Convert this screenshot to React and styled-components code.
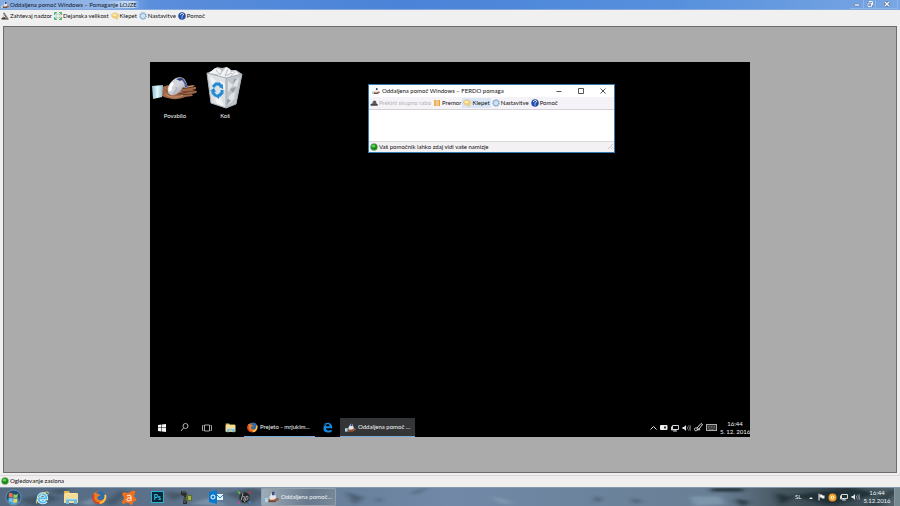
import React from 'react';
import styled, { createGlobalStyle } from 'styled-components';

const GlobalStyle = createGlobalStyle`
  *, *::before, *::after { box-sizing: border-box; }
  body { margin: 0; background: #f0eff0; }
  body, button { font-family: Lato, "Open Sans", sans-serif; font-size: 6px; line-height: 8px; }
  h1, h2, p { margin: 0; font-size: inherit; font-weight: 400; }
  button { border: 0; padding: 0; background: none; color: inherit; }
  svg { display: block; flex: none; }
`;

/* ---------- shared parts ---------- */

const Page = styled.div`
  display: flex;
  flex-direction: column;
  min-height: 100vh;
  color: #111;
  overflow: hidden;
`;

const TitleBar = styled.header`
  display: flex;
  align-items: center;
  height: 10px;
  padding-left: 1px;
  color: #10182c;
  background: linear-gradient(90deg, #86abe0 0, #93b7e8 110px, #5b8edb 150px, #4a83d8 45%, #5690dd 75%, #79a6e3 100%);
  border-bottom: 1px solid #84a9dc;
`;

const Caption = styled.h1`
  flex: 1;
  padding-left: 1px;
  white-space: nowrap;
  span {
    padding-right: 2px;
    background: linear-gradient(90deg, transparent 75%, #c2d8f2 88%, #c2d8f2 96%, transparent);
  }
`;

const Controls = styled.div`
  display: flex;
  align-self: stretch;
  padding-right: 2px;
`;

const GlassButton = styled.button`
  display: grid;
  place-items: center;
  width: ${(p) => p.$width}px;
  height: 9px;
  border: 1px solid #8fb4e8;
  border-top: 0;
  border-left-width: 0;
`;

const ToolBar = styled.nav`
  display: flex;
  align-items: center;
  height: 12px;
  background: ${(p) => p.$tone || '#f0f0f0'};
  white-space: nowrap;
`;

const ToolButton = styled.button`
  display: flex;
  align-items: center;
  gap: 1px;
  height: 10px;
  padding: 0 1px;
  color: ${(p) => (p.disabled ? '#b3b0b4' : '#111')};
  background: ${(p) => (p.$active ? '#d9e6f6' : 'transparent')};
`;

const Viewer = styled.main`
  display: flex;
  flex: 1;
  align-items: center;
  justify-content: center;
  margin: 4px 3px 2px;
  border: 1px solid #6c6c6c;
  background: #ababab;
`;

const StatusBar = styled.footer`
  display: flex;
  align-items: center;
  gap: 1px;
  height: ${(p) => p.$height}px;
  padding: 0 1px 1px;
  background: ${(p) => p.$tone || '#f0efee'};
  border-top: 1px solid #dad8da;
  color: #111;
`;

/* ---------- remote desktop ---------- */

const RemoteScreen = styled.section`
  position: relative;
  display: flex;
  flex-direction: column;
  justify-content: space-between;
  width: calc(100% - 292px);
  aspect-ratio: 8 / 5;
  background: #000;
  color: #f4f4f4;
  overflow: hidden;
`;

const Shortcuts = styled.div`
  display: flex;
  padding-top: 4px;
`;

const Shortcut = styled.button`
  display: flex;
  flex-direction: column;
  align-items: center;
  gap: 3px;
  width: 50px;
`;

const HelpWindow = styled.section`
  position: absolute;
  left: 218px;
  top: 22px;
  display: flex;
  flex-direction: column;
  width: 247px;
  height: 69px;
  border: 1px solid #3677ad;
  background: #fff;
  color: #111;
`;

const HelpTitle = styled.div`
  display: flex;
  align-items: center;
  height: 12px;
  padding-left: 3px;
  gap: 2px;
`;

const HelpCaption = styled.h2`
  flex: 1;
  white-space: nowrap;
`;

const WindowButtons = styled.div`
  display: flex;
`;

const FlatButton = styled.button`
  display: grid;
  place-items: center;
  width: 22px;
  height: 12px;
`;

const Chat = styled.div`
  flex: 1;
  border-top: 1px solid #d4d1d6;
`;

const Grow = styled.span`
  flex: 1;
`;

const RemoteTaskbar = styled.div`
  display: flex;
  height: 19px;
`;

const RemoteLaunch = styled.button`
  display: grid;
  place-items: center;
  width: ${(p) => p.$width || 23}px;
`;

const RemoteTask = styled.button`
  display: flex;
  align-items: center;
  gap: 2px;
  width: ${(p) => p.$width}px;
  padding-left: ${(p) => p.$inset}px;
  border-bottom: 1px solid #76a9d8;
  background: ${(p) => (p.$active ? '#343536' : 'transparent')};
  white-space: nowrap;
`;

const Tray = styled.div`
  display: flex;
  align-items: center;
  gap: 3px;
  margin-left: auto;
`;

const Clock = styled.time`
  display: flex;
  flex-direction: column;
  align-items: center;
  width: ${(p) => p.$width}px;
  line-height: 8px;
  white-space: nowrap;
`;

/* ---------- host taskbar ---------- */

const HostTaskbar = styled.footer`
  position: relative;
  display: flex;
  height: 19px;
  background: #68809b;
  color: #f2f5f8;
  overflow: hidden;
  border-top: 1px solid #8799ac;
`;

const Wallpaper = styled.svg`
  position: absolute;
  inset: 0;
  width: 100%;
  height: 100%;
`;

const Launchers = styled.div`
  position: relative;
  display: flex;
`;

const Launcher = styled.button`
  display: grid;
  place-items: center;
  width: ${(p) => p.$width || 29}px;
`;

const HostTask = styled.button`
  display: flex;
  align-items: center;
  gap: 2px;
  width: 75px;
  margin-left: 2px;
  padding-left: 3px;
  border: 1px solid #929fac;
  border-radius: 1px;
  background: linear-gradient(100deg, #a0adba, #66788b 65%, #78899a);
  white-space: nowrap;
`;

const HostTray = styled.div`
  position: relative;
  display: flex;
  align-items: center;
  gap: 3px;
  margin-left: auto;
`;

const Language = styled.span`
  width: 9px;
`;

const ShowDesktop = styled.button`
  align-self: stretch;
  width: 6px;
  border-left: 1px solid #8495a1;
  background: #778990;
`;

/* ---------- drawings ---------- */

const HelpIcon = ({ size = 8 }) => (
  <svg width={size} height={size} viewBox="0 0 16 16" aria-hidden="true">
    <path d="M0 9h4v5H0z" fill="#a9d5e9" />
    <path d="M4 10l4-1h7l1 2-5 3H4z" fill="#9a5f40" />
    <path d="M5 10V8l3-5 3 0 2 6-3 2H6z" fill="#e3e5ea" />
    <path d="M8 2h3v4H8z" fill="#375080" />
    <path d="M4 13h8" stroke="#623724" />
  </svg>
);
const ControlIcon = () => (
  <svg width="8" height="8" viewBox="0 0 16 16" aria-hidden="true">
    <path d="M1 15v-3l6-2 8 3v2z" fill="#3b3634" />
    <path d="M4 2l3-1 7 11-4 2-6-6z" fill="#77777b" />
    <path d="M5 4l1 4 4 4" stroke="#edf1f4" strokeWidth="2" fill="none" />
    <path d="M8 11l5 2" stroke="#bf7250" strokeWidth="2" />
  </svg>
);
const StopIcon = () => (
  <svg width="8" height="8" viewBox="0 0 16 16" aria-hidden="true">
    <path d="M1 13v-3l4-1V6l3-3 4 1 1 5 3 2v2z" fill="#5c5b5e" />
    <path d="M2 12h12" stroke="#363538" strokeWidth="2" />
  </svg>
);
const SizeIcon = () => (
  <svg width="8" height="8" viewBox="0 0 16 16" aria-hidden="true">
    <rect x="4" y="4" width="8" height="8" fill="#e5f1ee" stroke="#9eb3aa" />
    <path d="M1 6V1h5M10 1h5v5M15 10v5h-5M6 15H1v-5M1 1l4 4M15 1l-4 4M15 15l-4-4M1 15l4-4" fill="none" stroke="#5cb877" strokeWidth="2" />
  </svg>
);
const ChatIcon = () => (
  <svg width="8" height="8" viewBox="0 0 16 16" aria-hidden="true">
    <path d="M8 2c4 0 7 2 7 5 0 2-1 4-3 4l1 4-5-3c-4 0-7-2-7-5s3-5 7-5z" fill="#f8cf78" stroke="#deb766" />
    <ellipse cx="7" cy="6" rx="4" ry="2" fill="#fff0b9" />
  </svg>
);
const GearIcon = () => (
  <svg width="8" height="8" viewBox="0 0 16 16" aria-hidden="true">
    <circle cx="8" cy="8" r="6" fill="#e9f4fb" stroke="#83abd0" strokeWidth="3" strokeDasharray="3 1" />
    <circle cx="8" cy="8" r="5" fill="none" stroke="#94b8d8" strokeWidth="2" />
    <circle cx="8" cy="8" r="2" fill="#fff" stroke="#9abbd7" />
  </svg>
);
const QuestionIcon = () => (
  <svg width="8" height="8" viewBox="0 0 16 16" aria-hidden="true">
    <circle cx="8" cy="8" r="7" fill="#2552b2" stroke="#153a83" />
    <path d="M5 6c0-4 6-4 6-1 0 2-3 2-3 4M8 11v2" fill="none" stroke="#fff" strokeWidth="2" />
  </svg>
);
const PauseIcon = () => (
  <svg width="8" height="8" viewBox="0 0 16 16" aria-hidden="true">
    <path d="M2 2h5v12H2zM9 2h5v12H9z" fill="#e5a235" />
    <path d="M4 3v10M11 3v10" stroke="#f9cd75" strokeWidth="2" />
  </svg>
);
const GreenLight = () => (
  <svg width="8" height="8" viewBox="0 0 16 16" aria-hidden="true">
    <circle cx="8" cy="8" r="7" fill="#138a17" stroke="#9dad99" />
    <ellipse cx="7" cy="6" rx="4" ry="3" fill="#61cd4e" />
  </svg>
);

const InviteArt = () => (
  <svg width="46" height="43" viewBox="0 0 46 43" aria-hidden="true">
    <defs>
      <linearGradient id="cuff" x2="1"><stop stopColor="#8abfd2" /><stop offset=".5" stopColor="#e2f7fc" /><stop offset="1" stopColor="#91bac9" /></linearGradient>
      <linearGradient id="mouse" x2="1" y2="1"><stop offset=".1" stopColor="#d5d7dd" /><stop offset=".5" stopColor="#d0d2d9" /><stop offset="1" stopColor="#7f8394" /></linearGradient>
    </defs>
    <path d="M10 21c5-2 9-2 15-1h9l8-1 1 1-3 1h4v2l-4 1 5 1-1 2-5 1 2 1-1 1-7 1c-7 3-14 3-23-1z" fill="#a26a4a" />
    <path d="M14 24c7 5 15 5 23 1M28 23l14-2M30 26l13-1M28 29l11-1" stroke="#68402b" fill="none" />
    <path d="M13 28c5 4 12 4 18 1M34 21l7-1" stroke="#c99470" fill="none" />
    <path d="M0 20l11-1-1 12-9 2z" fill="url(#cuff)" />
    <path d="M16 26c-1-4 1-8 4-11 3-3 7-5 11-3 3 2 4 6 5 10l-5-1c-2 4-5 7-9 8-3 1-5-1-6-3z" fill="url(#mouse)" />
    <path d="M30 12c3 2 5 6 6 10l-3-1c0-4-2-6-5-8z" fill="#4b5a96" />
    <path d="M24 13l4-1 3 1-3 2z" fill="#2c3a72" />
    <path d="M21 17c-2 2-3 5-3 8" stroke="#fff" strokeWidth="3" fill="none" />
    <path d="M24 21c1 3-1 5-3 7" stroke="#a1a4b0" fill="none" />
  </svg>
);
const BinArt = () => (
  <svg width="38" height="43" viewBox="0 0 38 43" aria-hidden="true">
    <path d="M1 7l7-3 3-3 5 1 5-1 4 3 5 0 6 4-6 30-10 4-15-5z" fill="#b9bec3" />
    <path d="M3 7l6-5 5 1 2 3 4-5 4 2 1 3 5-1 4 4-14 4-13-3z" fill="#f1f2f3" />
    <path d="M1 7l19 5v30L5 37z" fill="#dde1e4" />
    <path d="M20 12l16-4-6 30-10 4z" fill="#c0c5ca" />
    <path d="M22 15l5 4-5 7zM29 14l4-2-2 9-4-1zM23 30l6-5-1 8-6 6z" fill="#e0e4e7" />
    <path d="M24 23l6-2-3 6zM21 33l4 1-4 5zM28 13l3 0-4 5z" fill="#979fa7" />
    <path d="M4 10l6 5-4 4zM14 14l5 4v7zM9 33l5-2 4 9-7-2z" fill="#f3f4f5" />
    <path d="M10 4l4 5 3-6M22 3l-3 7 7-3M29 6l-4 4M6 8l6 1" fill="none" stroke="#b6bcc2" />
    <path d="M1 7l19 5 16-4M20 12v29M1 7l4 30 15 5 10-4 6-30" fill="none" stroke="#a5adb4" />
    <path d="M7 21l3-3h3l2 2M16 24l0 3-3 3M10 30l-3-3 0-2" fill="none" stroke="#218bd5" strokeWidth="3" />
    <path d="M13 21l4-3v5zM14 27l-1 6-4-3zM4 25l4-3 2 4z" fill="#218bd5" />
  </svg>
);
const FolderIcon = ({ size = 11 }) => (
  <svg width={size} height={size} viewBox="0 0 16 16" aria-hidden="true">
    <path d="M1 2h5l1 2h8v10H1z" fill="#dfb557" />
    <path d="M2 4h12v8H2z" fill="#fae7a5" />
    <path d="M1 5h14v9H1z" fill="#f3dc93" />
    <path d="M3 10h11v5h-3v-3H6v3H3z" fill="#6bbce2" />
    <path d="M3 10h11" stroke="#bce5ef" />
  </svg>
);
const FirefoxIcon = ({ size = 11 }) => (
  <svg width={size} height={size} viewBox="0 0 16 16" aria-hidden="true">
    <circle cx="8" cy="8" r="7" fill="#e8661f" />
    <circle cx="9" cy="6" r="5" fill="#2e6da9" />
    <path d="M2 3c2 0 3 1 5 1l2 2-3 1c-1 3 1 4 3 4 3 0 4-2 5-4 0 5-3 7-6 7-5 0-8-5-6-11z" fill="#ec7c24" />
    <path d="M14 5a7 7 0 0 1-6 9" fill="none" stroke="#fbc64b" strokeWidth="2" />
    <path d="M2 5a6 6 0 0 0 6 9" fill="none" stroke="#d33f20" strokeWidth="2" />
  </svg>
);
const EdgeIcon = () => (
  <svg width="11" height="11" viewBox="0 0 16 16" aria-hidden="true">
    <path d="M1 7C2 3 5 1 8 1c5 0 7 4 7 8H6c0 4 5 4 8 2v3c-6 3-12 1-12-5 0-3 2-5 5-6-4 0-5 2-6 4zm5-1h5c0-4-5-4-5 0z" fill="#1589e0" />
  </svg>
);
const IEIcon = () => (
  <svg width="14" height="15" viewBox="0 0 16 16" aria-hidden="true">
    <path d="M4 9h9c0-7-9-6-9 0 0 5 6 6 9 3" fill="none" stroke="#d3f1fc" strokeWidth="4" />
    <path d="M4 9h9c0-7-9-6-9 0 0 5 6 6 9 3" fill="none" stroke="#4fbdf0" strokeWidth="2" />
    <path d="M2 15C-1 10 11 0 15 2c1 1 0 2-1 3" fill="none" stroke="#ead873" />
  </svg>
);
const WindowsOrb = () => (
  <svg width="17" height="17" viewBox="0 0 18 18" aria-hidden="true">
    <defs><radialGradient id="orb" cy=".8"><stop stopColor="#63c8ea" /><stop offset="1" stopColor="#1c4a79" /></radialGradient></defs>
    <circle cx="9" cy="9" r="8" fill="url(#orb)" stroke="#6f95b0" />
    <path d="M4 5q2-2 4 0v4q-2-1-4 0z" fill="#ee7041" />
    <path d="M9 5q2 2 5 0l-1 4q-2 1-4 0z" fill="#9bcd55" />
    <path d="M4 10q2-1 4 0v4q-2-1-4 0z" fill="#73c4ec" />
    <path d="M9 10q2 1 4 0v4q-2 1-4 0z" fill="#f7d25c" />
  </svg>
);
const AvastIcon = () => (
  <svg width="16" height="15" viewBox="0 0 32 30" aria-hidden="true">
    <path d="M3 6c2-3 5-1 9 0 5 1 9-6 14-5 5 2 1 7 0 10-1 4 5 4 5 8 0 3-4 3-6 4-2 2 0 6-4 7-4 0-4-5-8-5-3 0-7 4-10 2-4-3 3-7 3-11 0-3-5-6-3-10z" fill="#ef711e" />
    <path d="M12 12q8-4 8 2v8M20 16c-12-2-10 9-2 5" fill="none" stroke="#fff" strokeWidth="2" />
  </svg>
);
const PhotoshopMark = styled.span`
  display: grid;
  place-items: center;
  width: 13px;
  height: 12px;
  border: 1px solid #27b6d6;
  background: #092736;
  color: #35c7e6;
  font-size: 7px;
  line-height: 8px;
  font-weight: 700;
`;
const CameraIcon = () => (
  <svg width="13" height="15" viewBox="0 0 13 15" aria-hidden="true">
    <path d="M1 1h5l1 4v9H3l1-8-3-1z" fill="#2a2d2c" />
    <path d="M6 5h6v6H6z" fill="#5d6c35" /><path d="M8 6h3v4H8z" fill="#a2b34e" />
    <path d="M2 2h4M5 7v6" stroke="#696d70" />
  </svg>
);
const OutlookIcon = () => (
  <svg width="14" height="14" viewBox="0 0 14 14" aria-hidden="true">
    <path d="M0 2l8-2v14l-8-2z" fill="#0879ce" />
    <path d="M8 4h6v6H8z" fill="#e9f3fa" /><path d="M8 5l3 3 3-3" stroke="#1b80c9" fill="none" />
    <ellipse cx="4" cy="7" rx="2" ry="2" fill="none" stroke="#fff" />
  </svg>
);
const HpIcon = () => (
  <svg width="15" height="15" viewBox="0 0 30 30" aria-hidden="true">
    <path d="M2 3l5 5" stroke="#5cd03b" strokeWidth="3" /><path d="M23 8l5-5" stroke="#d92850" strokeWidth="3" />
    <path d="M2 27l5-5" stroke="#d64393" strokeWidth="3" /><path d="M23 22l5 5" stroke="#348ee0" strokeWidth="3" />
    <circle cx="15" cy="15" r="11" fill="#202529" stroke="#4f565b" strokeWidth="2" />
    <path d="M12 6L8 21M11 14q5-3 4 1l-2 6M19 12l-4 12M18 13q5-2 4 2c0 4-2 6-5 5" stroke="#a5a9ac" strokeWidth="2" fill="none" />
  </svg>
);
const WindowsIcon = () => (
  <svg width="8" height="8" viewBox="0 0 16 16" aria-hidden="true"><path d="M0 2l7-1v6H0zM8 1l8-1v7H8zM0 8h7v7l-7-1zM8 8h8v8l-8-1z" fill="#f5f5f5" /></svg>
);
const SearchIcon = () => (
  <svg width="9" height="9" viewBox="0 0 18 18" aria-hidden="true"><circle cx="11" cy="6" r="5" fill="none" stroke="#b5b5b5" strokeWidth="2" /><path d="M7 10L2 16" stroke="#b5b5b5" strokeWidth="2" /></svg>
);
const TaskViewIcon = () => (
  <svg width="10" height="8" viewBox="0 0 20 16" aria-hidden="true"><path d="M5 2h10v12H5zM3 3H1v10h2M17 3h2v10h-2" fill="none" stroke="#a5a5a5" strokeWidth="2" /></svg>
);
const ChevronIcon = () => (
  <svg width="7" height="6" viewBox="0 0 14 12" aria-hidden="true"><path d="M1 9l6-6 6 6" fill="none" stroke="#ddd" strokeWidth="2" /></svg>
);
const BatteryIcon = () => (
  <svg width="8" height="7" viewBox="0 0 16 14" aria-hidden="true"><path d="M1 3h13v8H1z" fill="#eee" stroke="#eee" strokeWidth="2" /><path d="M8 5h4v4H8z" fill="#333" /></svg>
);
const MonitorIcon = () => (
  <svg width="8" height="8" viewBox="0 0 16 16" aria-hidden="true"><path d="M3 3h12v8H3zM8 11v3M4 14h8M1 5v7h3" fill="none" stroke="#d2d7da" strokeWidth="2" /></svg>
);
const VolumeIcon = () => (
  <svg width="9" height="8" viewBox="0 0 18 16" aria-hidden="true"><path d="M1 6h3l4-4v12l-4-4H1z" fill="#dfe3e5" /><path d="M10 5q3 3 0 6M13 3q4 5 0 10M16 2q3 6 0 12" fill="none" stroke="#d5dadd" /></svg>
);
const PenIcon = () => (
  <svg width="9" height="9" viewBox="0 0 18 18" aria-hidden="true"><path d="M6 10l8-9 3 2-7 9-4 1zM5 9c-8 2-3 10 2 5 4-4 6-1 3 1" fill="none" stroke="#ddd" strokeWidth="2" /></svg>
);
const KeyboardIcon = () => (
  <svg width="11" height="7" viewBox="0 0 22 14" aria-hidden="true"><rect x="1" y="1" width="20" height="12" fill="#333" stroke="#aaa" strokeWidth="2" /><path d="M4 5h14M4 8h14M6 11h10" stroke="#999" strokeDasharray="2 1" /></svg>
);
const FlagIcon = () => (
  <svg width="7" height="8" viewBox="0 0 14 16" aria-hidden="true"><path d="M2 1v14" stroke="#eee" strokeWidth="2" /><path d="M3 3h5l1 2h4v6H8L7 9H3z" fill="#f0f0f0" /></svg>
);
const OrangeIcon = () => (
  <svg width="9" height="9" viewBox="0 0 18 18" aria-hidden="true"><circle cx="9" cy="9" r="8" fill="#f19b25" /><circle cx="9" cy="9" r="4" fill="#fff1c9" /><path d="M9 7v3h2" stroke="#ef9c26" strokeWidth="2" fill="none" /></svg>
);
const UpIcon = () => (
  <svg width="8" height="3" viewBox="0 0 8 3" aria-hidden="true"><path d="M2 3l2-2 2 2z" fill="#e1e7eb" /></svg>
);
const MinGlyph = () => (
  <svg width="6" height="6" viewBox="0 0 12 12" aria-hidden="true"><path d="M1 6h10v4H1z" fill="#f2f2f2" stroke="#57709a" /></svg>
);
const RestoreGlyph = () => (
  <svg width="6" height="6" viewBox="0 0 12 12" aria-hidden="true"><path d="M4 1h7v7M2 4h7v7H2z" fill="none" stroke="#4e6282" strokeWidth="3" /><path d="M4 1h7v7M2 4h7v7H2z" fill="none" stroke="#f5f5f5" strokeWidth="2" /></svg>
);
const CloseGlyph = () => (
  <svg width="6" height="6" viewBox="0 0 12 12" aria-hidden="true"><path d="M2 2l8 8M10 2l-8 8" stroke="#465a78" strokeWidth="5" /><path d="M2 2l8 8M10 2l-8 8" stroke="#f5f5f5" strokeWidth="3" /></svg>
);
const ThinGlyph = ({ d }) => (
  <svg width="6" height="6" viewBox="0 0 12 12" aria-hidden="true"><path d={d} fill="none" stroke="#555" strokeWidth="2" /></svg>
);
const Grip = () => (
  <svg width="5" height="5" viewBox="0 0 5 5" aria-hidden="true"><path d="M0 5l5-5M3 5l2-2" stroke="#ccc8d0" /></svg>
);

const hostTools = [
  ['Zahtevaj nadzor', ControlIcon],
  ['Dejanska velikost', SizeIcon],
  ['Klepet', ChatIcon],
  ['Nastavitve', GearIcon],
  ['Pomoč', QuestionIcon],
];
const remoteTools = [
  ['Prekini skupno rabo', StopIcon, 'disabled'],
  ['Premor', PauseIcon],
  ['Klepet', ChatIcon, 'active'],
  ['Nastavitve', GearIcon],
  ['Pomoč', QuestionIcon],
];
const launchers = [
  ['Internet Explorer', <IEIcon />],
  ['Raziskovalec', <FolderIcon size={16} />],
  ['Firefox', <FirefoxIcon size={15} />],
  ['Avast', <AvastIcon />],
  ['Photoshop', <PhotoshopMark>Ps</PhotoshopMark>],
  ['Kamera', <CameraIcon />],
  ['Outlook', <OutlookIcon />],
  ['HP', <HpIcon />],
];

const Tools = ({ items, tone }) => (
  <ToolBar $tone={tone}>
    {items.map(([label, Icon, state]) => (
      <ToolButton key={label} disabled={state === 'disabled'} $active={state === 'active'}>
        <Icon />
        {label}
      </ToolButton>
    ))}
  </ToolBar>
);

export default function App() {
  return (
    <Page>
      <GlobalStyle />
      <TitleBar>
        <HelpIcon />
        <Caption><span>Oddaljena pomoč Windows – Pomaganje LOJZE</span></Caption>
        <Controls>
          <GlassButton $width={14} aria-label="Minimiraj"><MinGlyph /></GlassButton>
          <GlassButton $width={12} aria-label="Obnovi"><RestoreGlyph /></GlassButton>
          <GlassButton $width={22} aria-label="Zapri"><CloseGlyph /></GlassButton>
        </Controls>
      </TitleBar>
      <Tools items={hostTools} />

      <Viewer>
        <RemoteScreen>
          <Shortcuts>
            <Shortcut><InviteArt />Povabilo</Shortcut>
            <Shortcut><BinArt />Koš</Shortcut>
          </Shortcuts>

          <HelpWindow>
            <HelpTitle>
              <HelpIcon />
              <HelpCaption>Oddaljena pomoč Windows – FERDO pomaga</HelpCaption>
              <WindowButtons>
                <FlatButton aria-label="Minimiraj"><ThinGlyph d="M1 7h10" /></FlatButton>
                <FlatButton aria-label="Maksimiraj"><ThinGlyph d="M1 1h10v10H1z" /></FlatButton>
                <FlatButton aria-label="Zapri"><ThinGlyph d="M1 1l10 10M11 1L1 11" /></FlatButton>
              </WindowButtons>
            </HelpTitle>
            <Tools items={remoteTools} tone="#f5f3f7" />
            <Chat />
            <StatusBar $height={11} $tone="#f4f1f5">
              <GreenLight />
              <p>Vaš pomočnik lahko zdaj vidi vaše namizje</p>
              <Grow />
              <Grip />
            </StatusBar>
          </HelpWindow>

          <RemoteTaskbar>
            <RemoteLaunch aria-label="Start"><WindowsIcon /></RemoteLaunch>
            <RemoteLaunch aria-label="Iskanje"><SearchIcon /></RemoteLaunch>
            <RemoteLaunch $width={21} aria-label="Pogled opravil"><TaskViewIcon /></RemoteLaunch>
            <RemoteLaunch $width={27} aria-label="Raziskovalec"><FolderIcon /></RemoteLaunch>
            <RemoteTask $width={71} $inset={3}><FirefoxIcon />Prejeto - mrjuklm...</RemoteTask>
            <RemoteLaunch $width={25} aria-label="Edge"><EdgeIcon /></RemoteLaunch>
            <RemoteTask $width={75} $inset={5} $active><HelpIcon size={11} />Oddaljena pomoč ...</RemoteTask>
            <Tray>
              <ChevronIcon />
              <BatteryIcon />
              <MonitorIcon />
              <VolumeIcon />
              <PenIcon />
              <KeyboardIcon />
              <Clock $width={30}><span>16:44</span><span>5. 12. 2016</span></Clock>
            </Tray>
          </RemoteTaskbar>
        </RemoteScreen>
      </Viewer>

      <StatusBar $height={12}>
        <GreenLight />
        <p>Ogledovanje zaslona</p>
      </StatusBar>

      <HostTaskbar>
        <Wallpaper viewBox="0 0 900 19" preserveAspectRatio="none" aria-hidden="true">
          <defs>
            <linearGradient id="sky" x2="1">
              <stop stopColor="#526981" /><stop offset=".2" stopColor="#5e738b" /><stop offset=".5" stopColor="#7189a7" />
              <stop offset=".8" stopColor="#687e94" /><stop offset=".87" stopColor="#46565f" /><stop offset=".93" stopColor="#34434c" /><stop offset="1" stopColor="#53656e" />
            </linearGradient>
            <filter id="soft"><feGaussianBlur stdDeviation="3 1" /></filter>
          </defs>
          <rect width="900" height="19" fill="url(#sky)" />
          <g filter="url(#soft)">
            <path d="M20 12l25-6 15 5-25 9zM50 2l20-2-10 8zM105 15l16-13 8 3-16 14zM165 4l24 2-17 8zM225 6l25-6 20 4-20 14zM346 4l18 6-10 8z" fill="#354855" opacity=".6" />
            <path d="M410 6l14-6h4l-12 6zM376 10l6 2-4 4zM595 8l8 4-8 4zM632 10l10 4-8 3z" fill="#354855" opacity=".6" />
            <path d="M711 0h32v4h-32zM735 12l14 2-6 6zM775 5l18 5-12 8zM790 8l60-8 30 6-50 12z" fill="#1c2930" opacity=".8" />
            <path d="M865 19l25-17h10l-20 17z" fill="#23333b" opacity=".7" />
            <path d="M490 8l14 4 10 5-14-1zM190 17l20-7 18 9zM80 16l20-8-8 11zM690 9l30 0 5 8-30 2z" fill="#8ca5b9" opacity=".6" />
          </g>
        </Wallpaper>
        <Launchers>
          <Launcher $width={27} aria-label="Start"><WindowsOrb /></Launcher>
          {launchers.map(([label, icon]) => (
            <Launcher key={label} aria-label={label}>{icon}</Launcher>
          ))}
          <HostTask><HelpIcon size={14} />Oddaljena pomoč...</HostTask>
        </Launchers>
        <HostTray>
          <Language>SL</Language>
          <UpIcon />
          <FlagIcon />
          <OrangeIcon />
          <MonitorIcon />
          <VolumeIcon />
          <Clock $width={28}><span>16:44</span><span>5.12.2016</span></Clock>
          <ShowDesktop aria-label="Pokaži namizje" />
        </HostTray>
      </HostTaskbar>
    </Page>
  );
}
